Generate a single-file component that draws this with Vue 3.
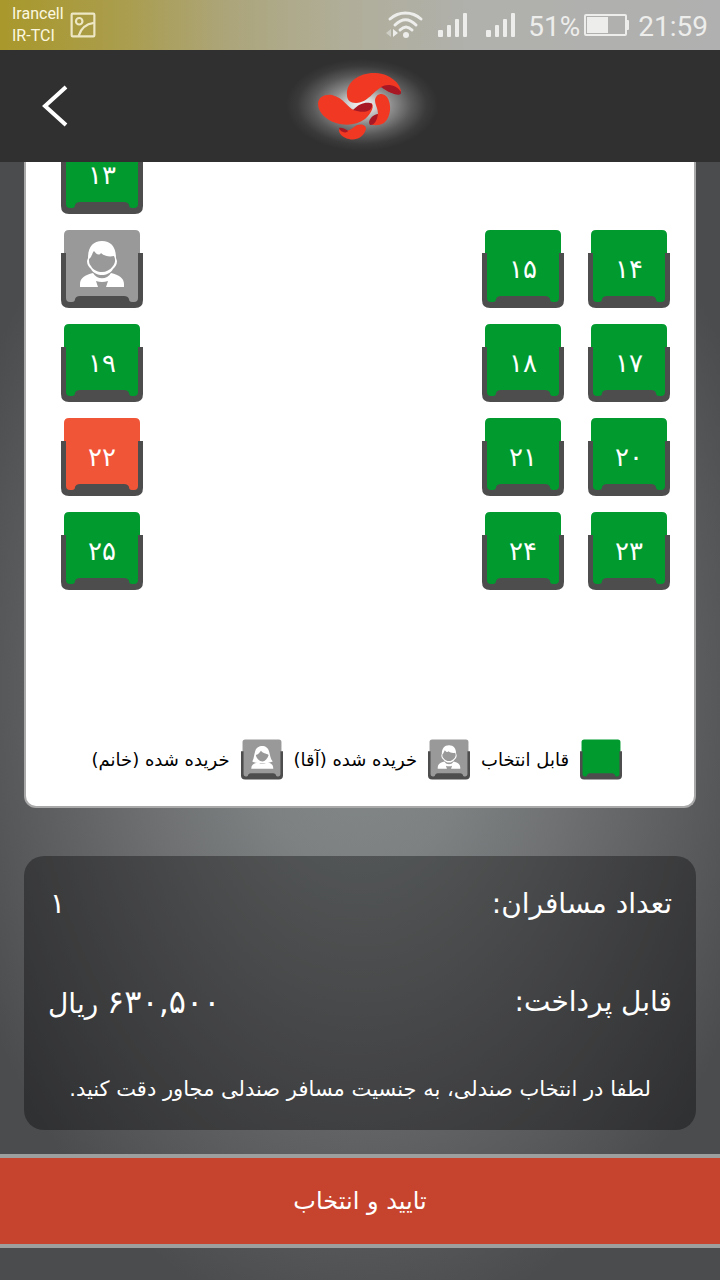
<script setup>
const seats = [
  { number: '۱۳', row: 1, column: 1 },
  { number: '', row: 2, column: 1, state: 'sold' },
  { number: '۱۵', row: 2, column: 3 },
  { number: '۱۴', row: 2, column: 4 },
  { number: '۱۹', row: 3, column: 1 },
  { number: '۱۸', row: 3, column: 3 },
  { number: '۱۷', row: 3, column: 4 },
  { number: '۲۲', row: 4, column: 1, state: 'chosen' },
  { number: '۲۱', row: 4, column: 3 },
  { number: '۲۰', row: 4, column: 4 },
  { number: '۲۵', row: 5, column: 1 },
  { number: '۲۴', row: 5, column: 3 },
  { number: '۲۳', row: 5, column: 4 }
]
const legend = [
  { label: 'قابل انتخاب', state: 'free' },
  { label: 'خریده شده (آقا)', state: 'sold', person: 'man' },
  { label: 'خریده شده (خانم)', state: 'sold', person: 'woman' }
]
</script>

<template>
  <div class="screen">
    <div class="status">
      <div class="carriers"><span>Irancell</span><span>IR-TCI</span></div>
      <svg class="gallery" viewBox="0 0 24 24" aria-hidden="true">
        <rect x="1.5" y="1.5" width="21" height="21" rx="1" />
        <circle cx="8.500" cy="8.500" r="3" />
        <path d="M8 22C10 15 15 11 22 10" />
      </svg>
      <span class="spacer"></span>
      <svg class="wifi" viewBox="0 0 38 28" aria-hidden="true">
        <path class="arc" d="M4 8C13 0 26 0 35 8M9 14C16 7 23 7 30 14M14 19C18 15 22 15 26 19" />
        <circle cx="20" cy="24" r="3" />
        <path class="faint" d="M0 22L5 18V26Z" /><path d="M7 18L12 22L7 26Z" />
      </svg>
      <svg v-for="n in 2" :key="n" class="signal" viewBox="0 0 30 26" aria-hidden="true">
        <rect x="0" y="18" width="5" height="7" rx="1" /><rect x="9" y="13" width="4" height="12" rx="1" />
        <rect x="17" y="7" width="4" height="18" rx="1" /><rect x="25" y="1" width="4" height="24" rx="1" />
      </svg>
      <span class="reading">51%</span>
      <svg class="battery" viewBox="0 0 46 22" aria-hidden="true">
        <rect class="shell" x="1" y="1" width="41" height="20" rx="1" />
        <rect x="3" y="3" width="21" height="16" /><rect x="42" y="6" width="3" height="10" rx="1" />
      </svg>
      <span class="reading">21:59</span>
    </div>

    <header class="bar">
      <button class="back" type="button" aria-label="بازگشت">
        <svg viewBox="0 0 26 42" aria-hidden="true"><path d="M24 2L3 21L24 40" /></svg>
      </button>
      <svg class="logo" viewBox="0 0 160 112" aria-hidden="true">
        <defs>
          <radialGradient id="glow">
            <stop offset="0" stop-color="#f8f8f8" /><stop offset=".15" stop-color="#dcdcdc" />
            <stop offset=".4" stop-color="#8c8c8c" /><stop offset=".65" stop-color="#585858" />
            <stop offset=".85" stop-color="#3a3a3a" /><stop offset="1" stop-color="#303030" />
          </radialGradient>
        </defs>
        <ellipse cx="82" cy="55" rx="76" ry="46" fill="url(#glow)" />
        <g fill="#f03823">
          <path d="M67 45C66 31 81 22 96 23C110 24 120 33 121 41C119 46 108 43 102 37C93 41 89 52 76 53C70 53 67 50 67 45Z" />
          <path d="M38 54C38 47 45 44 52 45C64 48 68 58 74 60C81 61 87 56 91 53C95 55 92 63 85 69C77 75 66 76 56 73C46 70 38 62 38 54Z" />
          <path d="M95 50C96 43 103 42 107 47C112 54 111 67 104 73C99 76 91 76 90 73C90 69 94 66 98 64C98 58 95 55 95 50Z" />
          <path d="M59 79C66 83 70 80 74 77C79 73 86 74 86 79C84 87 76 91 69 89C63 88 58 83 59 79Z" />
        </g>
        <g fill="#a71724">
          <path d="M101 37C107 33 117 35 121 42C122 47 112 45 101 37Z" />
          <path d="M73 60C79 53 88 51 92 54C93 61 85 64 73 60Z" />
          <path d="M98 64C97 70 95 75 90 75C87 71 92 65 98 64Z" />
          <path d="M59 78C61 77 66 79 68 81C66 84 60 82 59 78Z" />
        </g>
      </svg>
    </header>

    <svg class="symbols" aria-hidden="true">
      <symbol id="seat-frame" viewBox="0 0 82 80">
        <path class="cushion" d="M3 6Q3 1 8 1H74Q79 1 79 6V74H3Z" />
        <path fill="#4d4d4d" d="M0 24H5V69Q5 73 9 73H11Q14 73 14 70Q15 67 19 67H63Q67 67 68 70Q68 73 71 73H73Q77 73 77 69V24H82V71Q82 79 74 79H8Q0 79 0 71Z" />
      </symbol>
      <symbol id="man" viewBox="0 0 82 80">
        <path fill="#fff" d="M27 29C27 18 32 12 41 12C50 12 55 18 55 29L56 32C56 36 54 38 52 40C50 44 45 46 41 46C37 46 32 44 30 40C28 38 26 36 26 32Z" />
        <path fill="#999" d="M28 30C31 28 31 24 33 22C35 25 38 27 40 24C43 27 48 28 53 27C55 31 54 34 52 37C49 41 45 43 41 43C37 43 32 41 30 37C28 35 28 33 28 30Z" />
        <path fill="#fff" d="M19 58V55C19 49 24 46 32 44C36 51 46 51 50 44C58 46 63 49 63 55V58H45L47 52Q41 54 35 52L37 58Z" />
        <path fill="none" stroke="#fff" stroke-width="1" d="M34 49Q41 54 48 49" />
      </symbol>
      <symbol id="woman" viewBox="0 0 82 80">
        <path fill="#fff" d="M22 44C26 37 25 31 28 23C31 11 52 9 55 25C57 32 57 38 62 44C51 49 31 49 22 44Z" />
        <path fill="#999" d="M29 31C35 30 37 25 39 23C42 28 49 28 54 31C52 38 47 43 42 44C36 43 30 38 29 31Z" />
        <path fill="#fff" d="M20 58C20 50 25 47 34 46Q42 52 50 46C59 47 63 50 63 58Z" />
      </symbol>
    </svg>

    <main>
      <section class="map">
        <div class="seats">
          <button
            v-for="(seat, i) in seats"
            :key="i"
            type="button"
            class="seat"
            :class="seat.state"
            :disabled="seat.state === 'sold'"
            :aria-label="seat.number || 'خریده شده (آقا)'"
            :style="{ gridRow: seat.row, gridColumn: seat.column }"
          >
            <svg viewBox="0 0 82 80" aria-hidden="true">
              <use href="#seat-frame" /><use v-if="seat.state === 'sold'" href="#man" />
            </svg>
            <span>{{ seat.number }}</span>
          </button>
        </div>
        <ul class="legend">
          <li v-for="item in legend" :key="item.label">
            <svg :class="item.state" viewBox="0 0 82 80" aria-hidden="true">
              <use href="#seat-frame" /><use v-if="item.person" :href="'#' + item.person" />
            </svg>
            <span>{{ item.label }}</span>
          </li>
        </ul>
      </section>

      <section class="summary">
        <dl>
          <div><dt>تعداد مسافران:</dt><dd class="count">۱</dd></div>
          <div><dt>قابل پرداخت:</dt><dd><bdi dir="rtl">ریال</bdi> <bdi class="amount" dir="ltr">۶۳۰,۵۰۰</bdi></dd></div>
        </dl>
        <p>لطفا در انتخاب صندلی، به جنسیت مسافر صندلی مجاور دقت کنید.</p>
      </section>
    </main>

    <button class="confirm" type="button">تایید و انتخاب</button>
  </div>
</template>

<style>
body { margin: 0; background: #4b4c4e; }
</style>

<style scoped>
.screen {
  min-height: 100vh;
  box-sizing: border-box;
  overflow: hidden;
  background: radial-gradient(ellipse 60% 50% at 50% 54%, #858a8a 0%, #7d8182 28%, #68696b 60%, #4b4c4e 100%);
  font-family: "DejaVu Sans", sans-serif;
  color: #fff;
}
button { font: inherit; color: inherit; border: 0; padding: 0; margin: 0; cursor: pointer; }
.status {
  height: 50px;
  box-sizing: border-box;
  padding: 0 12px;
  display: flex;
  align-items: center;
  background: linear-gradient(90deg, #a9982b 0%, #aa9d4d 17%, #aca57b 32%, #b0ae99 48%, #b0b0ac 65%, #b0b0b0 100%);
  color: #ededeb;
  fill: #ededeb;
  font-family: Roboto, sans-serif;
}
.carriers { display: flex; flex-direction: column; font-size: 16px; line-height: 22px; width: 58px; color: #fcf8e0; }
.gallery { width: 26px; height: 26px; fill: none; stroke: #eee7c5; stroke-width: 2; }
.spacer { flex: 1; }
.wifi { width: 38px; height: 28px; margin-right: 14px; }
.wifi .arc { fill: none; stroke: #ededeb; stroke-width: 3; stroke-linecap: round; }
.wifi .faint { opacity: .5; }
.signal { width: 30px; height: 26px; margin-right: 18px; }
.signal + .reading { margin-left: -6px; }
.reading { font-size: 28px; line-height: 32px; padding-top: 3px; }
.battery { width: 46px; height: 22px; margin: 0 8px 0 4px; }
.battery .shell { fill: none; stroke: #ededeb; stroke-width: 2; }
.bar {
  height: 112px;
  display: grid;
  grid-template-columns: 1fr auto 1fr;
  align-items: center;
  background: #303030;
}
.back { justify-self: start; margin-left: 30px; padding: 12px; background: none; display: flex; }
.back svg { width: 26px; height: 42px; fill: none; stroke: #fff; stroke-width: 4; }
.logo { width: 160px; height: 112px; display: block; }
.symbols { position: absolute; width: 0; height: 0; }
main { padding: 0 24px 24px; }
.map {
  overflow: hidden;
  background: #fff;
  border: 2px solid #a9a9a9;
  border-top: 0;
  border-radius: 0 0 12px 12px;
}
.seats {
  display: grid;
  grid-template-columns: 82px 1fr 82px 82px;
  grid-auto-rows: 80px;
  gap: 14px 24px;
  margin-top: -27px;
  padding: 0 24px 0 35px;
}
.seat { display: grid; place-items: center; background: none; font-size: 26px; line-height: 24px; --cushion: #009a2f; }
.seat > * { grid-area: 1 / 1; }
.seat svg { width: 82px; height: 80px; }
.cushion { fill: var(--cushion); }
.seat.sold, .legend .sold { --cushion: #999; }
.seat.chosen { --cushion: #f15537; }
.legend {
  direction: rtl;
  list-style: none;
  margin: 148px 0 0;
  padding: 0 72px 26px;
  display: flex;
  gap: 11px;
  color: #000;
  font-size: 18px;
  line-height: 24px;
  white-space: nowrap;
}
.legend li { display: flex; align-items: center; gap: 11px; }
.legend svg { width: 42px; height: 41px; }
.legend .free { --cushion: #009a2f; }
.summary {
  margin-top: 48px;
  padding: 24px;
  border-radius: 20px;
  background: rgba(0, 0, 0, .35);
  direction: rtl;
}
dl { margin: 0; display: grid; gap: 50px; font-size: 28px; line-height: 48px; }
dl div { display: flex; justify-content: space-between; height: 48px; }
dd { margin: 0; direction: ltr; }
.count { padding-left: 2px; }
.amount { font-size: 32px; }
.summary p { margin: 46px 0 0; text-align: center; font-size: 21px; line-height: 34px; white-space: nowrap; }
.confirm {
  display: block;
  width: 100%;
  height: 94px;
  border: solid #9d9f9f;
  border-width: 4px 0;
  background: #c6432d;
  font-size: 24px;
}
</style>
